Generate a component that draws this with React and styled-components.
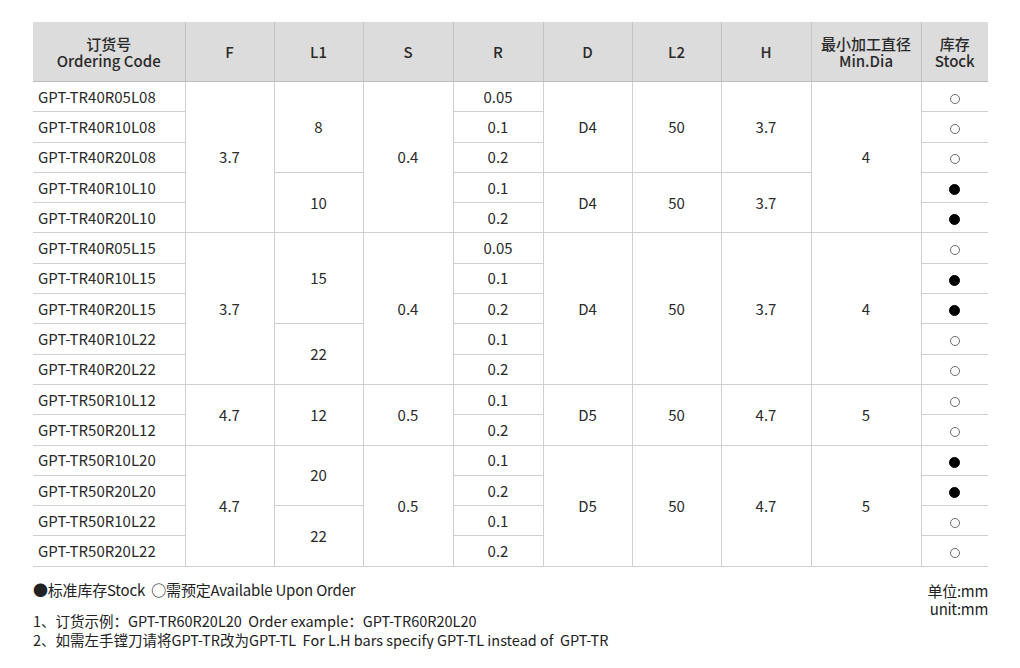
import styled, { createGlobalStyle } from 'styled-components';

const GlobalStyle = createGlobalStyle`
  body {
    margin: 0;
    background: #ffffff;
    font-family: "Noto Sans CJK SC", "Noto Sans", sans-serif;
  }
`;

const Page = styled.div`
  padding: 22px 0 0 33px;
  width: 955px;
`;

const Table = styled.table`
  width: 955px;
  border-collapse: collapse;
  table-layout: fixed;
  color: #2a2a2a;
  font-size: 15px;
`;

const Th = styled.th`
  height: 59px;
  padding: 0;
  background: #dcdcdc;
  font-weight: 500;
  font-size: 15px;
  line-height: 17px;
  color: #2a2a2a;
  text-align: center;
  border-left: 1px solid #c4c4c4;
  border-bottom: 1px solid #bdbdbd;
  &:first-child {
    border-left: none;
  }
`;

const Row = styled.tr`
  height: 30.3px;
`;

const Td = styled.td`
  padding: 0 ${(p) => (p.$left ? '5px' : '0')};
  text-align: ${(p) => (p.$left ? 'left' : 'center')};
  vertical-align: middle;
  border-left: 1px solid #cfcfcf;
  border-bottom: 1px solid #cfcfcf;
  line-height: 18px;
  &:first-child {
    border-left: none;
  }
`;

const Dot = styled.span`
  display: inline-block;
  width: ${(p) => (p.$filled ? '11px' : '10px')};
  height: ${(p) => (p.$filled ? '11px' : '10px')};
  border-radius: 50%;
  box-sizing: border-box;
  background: ${(p) => (p.$filled ? '#000000' : 'transparent')};
  border: 1px solid ${(p) => (p.$filled ? '#000000' : '#6a6a6a')};
  vertical-align: middle;
`;

const Footer = styled.div`
  display: flex;
  justify-content: space-between;
  align-items: flex-start;
  color: #222222;
`;

const Notes = styled.div`
  padding-top: 13px;
`;

const Legend = styled.div`
  font-size: 15px;
  line-height: 20px;
  margin-bottom: 11px;
  letter-spacing: -0.2px;
`;

const NoteLine = styled.div`
  font-size: 14.5px;
  line-height: 19px;
`;

const Unit = styled.div`
  padding-top: 15px;
  font-size: 15px;
  line-height: 18px;
  text-align: right;
  letter-spacing: -0.3px;
`;

const widths = [152, 89, 89, 90, 90, 89, 89, 90, 110, 67];

const groups = [
  {
    F: '3.7', S: '0.4', min: '4',
    l1: [['8', 3], ['10', 2]],
    dlh: [[3], [2]],
    rows: [
      ['GPT-TR40R05L08', '0.05', 0],
      ['GPT-TR40R10L08', '0.1', 0],
      ['GPT-TR40R20L08', '0.2', 0],
      ['GPT-TR40R10L10', '0.1', 1],
      ['GPT-TR40R20L10', '0.2', 1],
    ],
    d: 'D4', l2: '50', h: '3.7',
  },
  {
    F: '3.7', S: '0.4', min: '4',
    l1: [['15', 3], ['22', 2]],
    dlh: [[5]],
    rows: [
      ['GPT-TR40R05L15', '0.05', 0],
      ['GPT-TR40R10L15', '0.1', 1],
      ['GPT-TR40R20L15', '0.2', 1],
      ['GPT-TR40R10L22', '0.1', 0],
      ['GPT-TR40R20L22', '0.2', 0],
    ],
    d: 'D4', l2: '50', h: '3.7',
  },
  {
    F: '4.7', S: '0.5', min: '5',
    l1: [['12', 2]],
    dlh: [[2]],
    rows: [
      ['GPT-TR50R10L12', '0.1', 0],
      ['GPT-TR50R20L12', '0.2', 0],
    ],
    d: 'D5', l2: '50', h: '4.7',
  },
  {
    F: '4.7', S: '0.5', min: '5',
    l1: [['20', 2], ['22', 2]],
    dlh: [[4]],
    rows: [
      ['GPT-TR50R10L20', '0.1', 1],
      ['GPT-TR50R20L20', '0.2', 1],
      ['GPT-TR50R10L22', '0.1', 0],
      ['GPT-TR50R20L22', '0.2', 0],
    ],
    d: 'D5', l2: '50', h: '4.7',
  },
];

// 起始行 -> 跨行数
const startMap = (spans) => {
  const m = {};
  let i = 0;
  spans.forEach((s) => {
    m[i] = s;
    i += s[s.length - 1];
  });
  return m;
};

const GroupRows = ({ g }) => {
  const n = g.rows.length;
  const l1Map = startMap(g.l1);
  const dMap = startMap(g.dlh);
  return g.rows.map((r, i) => (
    <Row key={r[0]}>
      <Td $left>{r[0]}</Td>
      {i === 0 && <Td rowSpan={n}>{g.F}</Td>}
      {l1Map[i] && <Td rowSpan={l1Map[i][1]}>{l1Map[i][0]}</Td>}
      {i === 0 && <Td rowSpan={n}>{g.S}</Td>}
      <Td>{r[1]}</Td>
      {dMap[i] && <Td rowSpan={dMap[i][0]}>{g.d}</Td>}
      {dMap[i] && <Td rowSpan={dMap[i][0]}>{g.l2}</Td>}
      {dMap[i] && <Td rowSpan={dMap[i][0]}>{g.h}</Td>}
      {i === 0 && <Td rowSpan={n}>{g.min}</Td>}
      <Td>
        <Dot $filled={r[2] === 1} />
      </Td>
    </Row>
  ));
};

const App = () => {
  return (
    <Page>
      <GlobalStyle />
      <Table>
        <colgroup>
          {widths.map((w, i) => (
            <col key={i} style={{ width: w }} />
          ))}
        </colgroup>
        <thead>
          <tr>
            <Th>
              订货号
              <br />
              Ordering Code
            </Th>
            <Th>F</Th>
            <Th>L1</Th>
            <Th>S</Th>
            <Th>R</Th>
            <Th>D</Th>
            <Th>L2</Th>
            <Th>H</Th>
            <Th>
              最小加工直径
              <br />
              Min.Dia
            </Th>
            <Th>
              库存
              <br />
              Stock
            </Th>
          </tr>
        </thead>
        <tbody>
          {groups.map((g, i) => (
            <GroupRows key={i} g={g} />
          ))}
        </tbody>
      </Table>
      <Footer>
        <Notes>
          <Legend>●标准库存Stock&nbsp;&nbsp;○需预定Available Upon Order</Legend>
          <NoteLine>1、订货示例：GPT-TR60R20L20&nbsp;&nbsp;Order example：GPT-TR60R20L20</NoteLine>
          <NoteLine>2、如需左手镗刀请将GPT-TR改为GPT-TL&nbsp;&nbsp;For L.H bars specify GPT-TL instead of&nbsp;&nbsp;GPT-TR</NoteLine>
        </Notes>
        <Unit>
          单位:mm
          <br />
          unit:mm
        </Unit>
      </Footer>
    </Page>
  );
};

export default App;
